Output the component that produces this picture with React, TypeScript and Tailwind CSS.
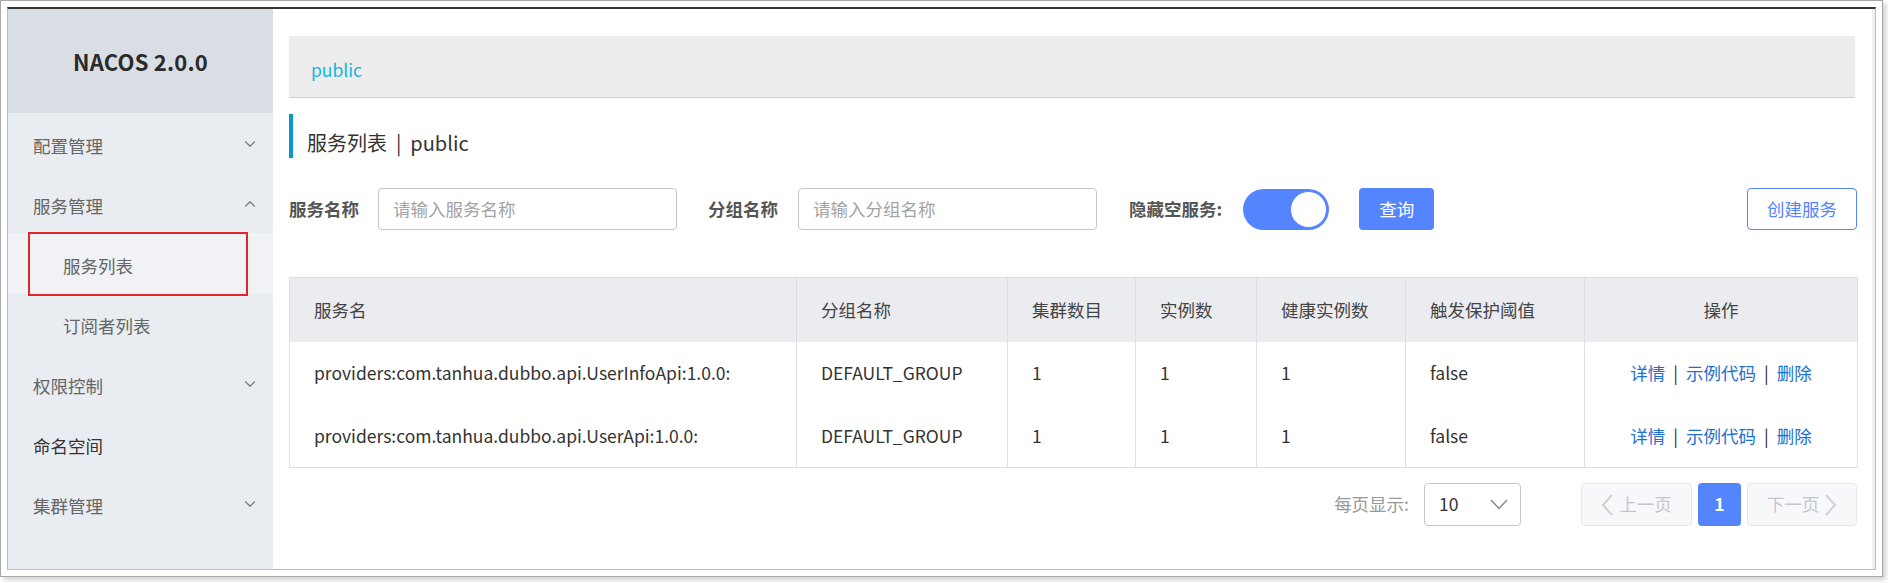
import { ChevronDown, ChevronUp } from 'lucide-react';

const menu = [
  { label: '配置管理', arrow: 'down' },
  { label: '服务管理', arrow: 'up' },
  { label: '服务列表', sub: true, active: true },
  { label: '订阅者列表', sub: true },
  { label: '权限控制', arrow: 'down' },
  { label: '命名空间', dark: true },
  { label: '集群管理', arrow: 'down' },
];

const columns = [
  { title: '服务名', width: 507 },
  { title: '分组名称', width: 211 },
  { title: '集群数目', width: 128 },
  { title: '实例数', width: 121 },
  { title: '健康实例数', width: 149 },
  { title: '触发保护阈值', width: 179 },
  { title: '操作', width: 273, center: true },
];

const services = [
  { name: 'providers:com.tanhua.dubbo.api.UserInfoApi:1.0.0:', group: 'DEFAULT_GROUP' },
  { name: 'providers:com.tanhua.dubbo.api.UserApi:1.0.0:', group: 'DEFAULT_GROUP' },
];

function Sidebar() {
  return (
    <div className="w-[265px] shrink-0 bg-[#e9ecf0] flex flex-col">
      {/* logo */}
      <div className="h-[104px] bg-[#d9dee4] flex items-center justify-center">
        <span className="text-[22px] font-bold text-[#2a2a2a] tracking-[0.2px]">NACOS 2.0.0</span>
      </div>
      {menu.map((item) => (
        <div
          key={item.label}
          className={`relative h-[60px] flex items-center justify-between pt-[7px] pr-[14px] ${
            item.sub ? 'pl-[55px]' : 'pl-[25px]'
          } ${item.active ? 'bg-[#f0f2f5]' : ''}`}
        >
          <span className={`text-[17.5px] ${item.dark ? 'text-[#333]' : 'text-[#666]'}`}>{item.label}</span>
          {item.arrow === 'down' && <ChevronDown className="w-[18px] h-[18px] text-[#777] -mt-[6px]" strokeWidth={1.5} />}
          {item.arrow === 'up' && <ChevronUp className="w-[18px] h-[18px] text-[#777] -mt-[6px]" strokeWidth={1.5} />}
          {/* annotation box */}
          {item.active && (
            <div className="absolute left-[20px] right-[25px] top-[-1px] bottom-[-3px] border-2 border-[#e2252c]" />
          )}
        </div>
      ))}
    </div>
  );
}

function Filters() {
  return (
    <div className="mt-[30px] h-[42px] flex items-center">
      <span className="text-[17.5px] font-bold text-[#555]">服务名称</span>
      <div className="ml-[19px] w-[299px] h-[42px] border border-[#c4c6cf] rounded-[4px] flex items-center pl-[14px] text-[17.5px] text-[#a3a3a3]">
        请输入服务名称
      </div>
      <span className="ml-[31px] text-[17.5px] font-bold text-[#555]">分组名称</span>
      <div className="ml-[20px] w-[299px] h-[42px] border border-[#c4c6cf] rounded-[4px] flex items-center pl-[14px] text-[17.5px] text-[#a3a3a3]">
        请输入分组名称
      </div>
      <span className="ml-[32px] text-[17.5px] font-bold text-[#555]">隐藏空服务:</span>
      <div className="ml-[21px] w-[86px] h-[41px] rounded-full bg-[#5584ff] flex items-center justify-end pr-[2px]">
        <div className="w-[37px] h-[37px] rounded-full bg-white border border-[#5584ff]" />
      </div>
      <button className="ml-[30px] w-[75px] h-[42px] rounded-[4px] bg-[#5584ff] text-white text-[17.5px]">查询</button>
      <div className="flex-1" />
      <button className="w-[110px] h-[42px] rounded-[4px] border border-[#5584ff] bg-white text-[#5584ff] text-[17.5px]">
        创建服务
      </button>
    </div>
  );
}

function ServiceTable() {
  return (
    <table className="mt-[47px] w-[1568px] table-fixed border-collapse border border-[#dcdee3] text-[17.5px] text-[#333]">
      <colgroup>
        {columns.map((c) => (
          <col key={c.title} style={{ width: c.width }} />
        ))}
      </colgroup>
      <thead>
        <tr className="h-[64px] bg-[#ebecf0]">
          {columns.map((c) => (
            <th
              key={c.title}
              className={`font-normal text-[#444] px-[24px] border-l border-[#dcdee3] first:border-l-0 ${
                c.center ? 'text-center' : 'text-left'
              }`}
            >
              {c.title}
            </th>
          ))}
        </tr>
      </thead>
      <tbody>
        {services.map((s) => (
          <tr key={s.name} className="h-[63px]">
            <td className="px-[24px] whitespace-nowrap">{s.name}</td>
            <td className="px-[24px] border-l border-[#dcdee3]">{s.group}</td>
            <td className="px-[24px] border-l border-[#dcdee3]">1</td>
            <td className="px-[24px] border-l border-[#dcdee3]">1</td>
            <td className="px-[24px] border-l border-[#dcdee3]">1</td>
            <td className="px-[24px] border-l border-[#dcdee3]">false</td>
            <td className="px-[24px] border-l border-[#dcdee3] text-center">
              <span className="text-[#1e6fd0]">详情</span>
              <span className="mx-[8px]">|</span>
              <span className="text-[#1e6fd0]">示例代码</span>
              <span className="mx-[8px]">|</span>
              <span className="text-[#1e6fd0]">删除</span>
            </td>
          </tr>
        ))}
      </tbody>
    </table>
  );
}

function Pagination() {
  return (
    <div className="mt-[15px] h-[43px] flex items-center justify-end text-[17.5px]">
      <span className="text-[#999]">每页显示:</span>
      <div className="ml-[15px] w-[97px] h-[43px] border border-[#c4c6cf] rounded-[4px] flex items-center justify-between pl-[14px] pr-[12px]">
        <span className="text-[#333]">10</span>
        <svg width="18" height="11" viewBox="0 0 18 11" fill="none" stroke="#888" strokeWidth="1.4">
          <polyline points="1,1 9,9.5 17,1" />
        </svg>
      </div>
      <div className="ml-[60px] w-[111px] h-[43px] border border-[#e6e7eb] bg-[#f7f8fa] rounded-[4px] flex items-center justify-center gap-[6px] text-[#c4c6cf]">
        <svg width="12" height="22" viewBox="0 0 12 22" fill="none" stroke="#cfd1d8" strokeWidth="2">
          <polyline points="11,1 2,11 11,21" />
        </svg>
        <span>上一页</span>
      </div>
      <div className="ml-[6px] w-[43px] h-[43px] rounded-[4px] bg-[#5584ff] text-white font-bold flex items-center justify-center">
        1
      </div>
      <div className="ml-[6px] w-[110px] h-[43px] border border-[#e6e7eb] bg-[#f7f8fa] rounded-[4px] flex items-center justify-center gap-[6px] text-[#c4c6cf]">
        <span>下一页</span>
        <svg width="12" height="22" viewBox="0 0 12 22" fill="none" stroke="#cfd1d8" strokeWidth="2">
          <polyline points="1,1 10,11 1,21" />
        </svg>
      </div>
    </div>
  );
}

export default function App() {
  return (
    <div className="w-[1888px] h-[583px] bg-white font-['Noto_Sans_CJK_SC',sans-serif]">
      <div className="w-[1883px] h-[577px] border border-[#a8a8a8] bg-white p-[6px] flex shadow-[3px_3px_5px_rgba(0,0,0,0.18)]">
        <div className="flex-1 flex border border-[#bdbdbd] border-t-2 border-t-[#333]">
          <Sidebar />
          {/* main */}
          <div className="flex-1 bg-white pl-[16px] pt-[27px] border-r-[3px] border-[#f0f0f0]">
            <div className="w-[1566px] h-[62px] bg-[#ededed] border-b border-[#cfcfcf] flex items-center pl-[22px] pt-[7px]">
              <span className="text-[17.5px] text-[#0fb7dc]">public</span>
            </div>
            <div className="mt-[16px] h-[44px] border-l-4 border-[#0b97d0] flex items-center pl-[14px] pt-[14px]">
              <span className="text-[20px] text-[#333]">服务列表 &nbsp;|&nbsp; public</span>
            </div>
            <div className="w-[1568px]">
              <Filters />
              <ServiceTable />
              <Pagination />
            </div>
          </div>
        </div>
      </div>
    </div>
  );
}
